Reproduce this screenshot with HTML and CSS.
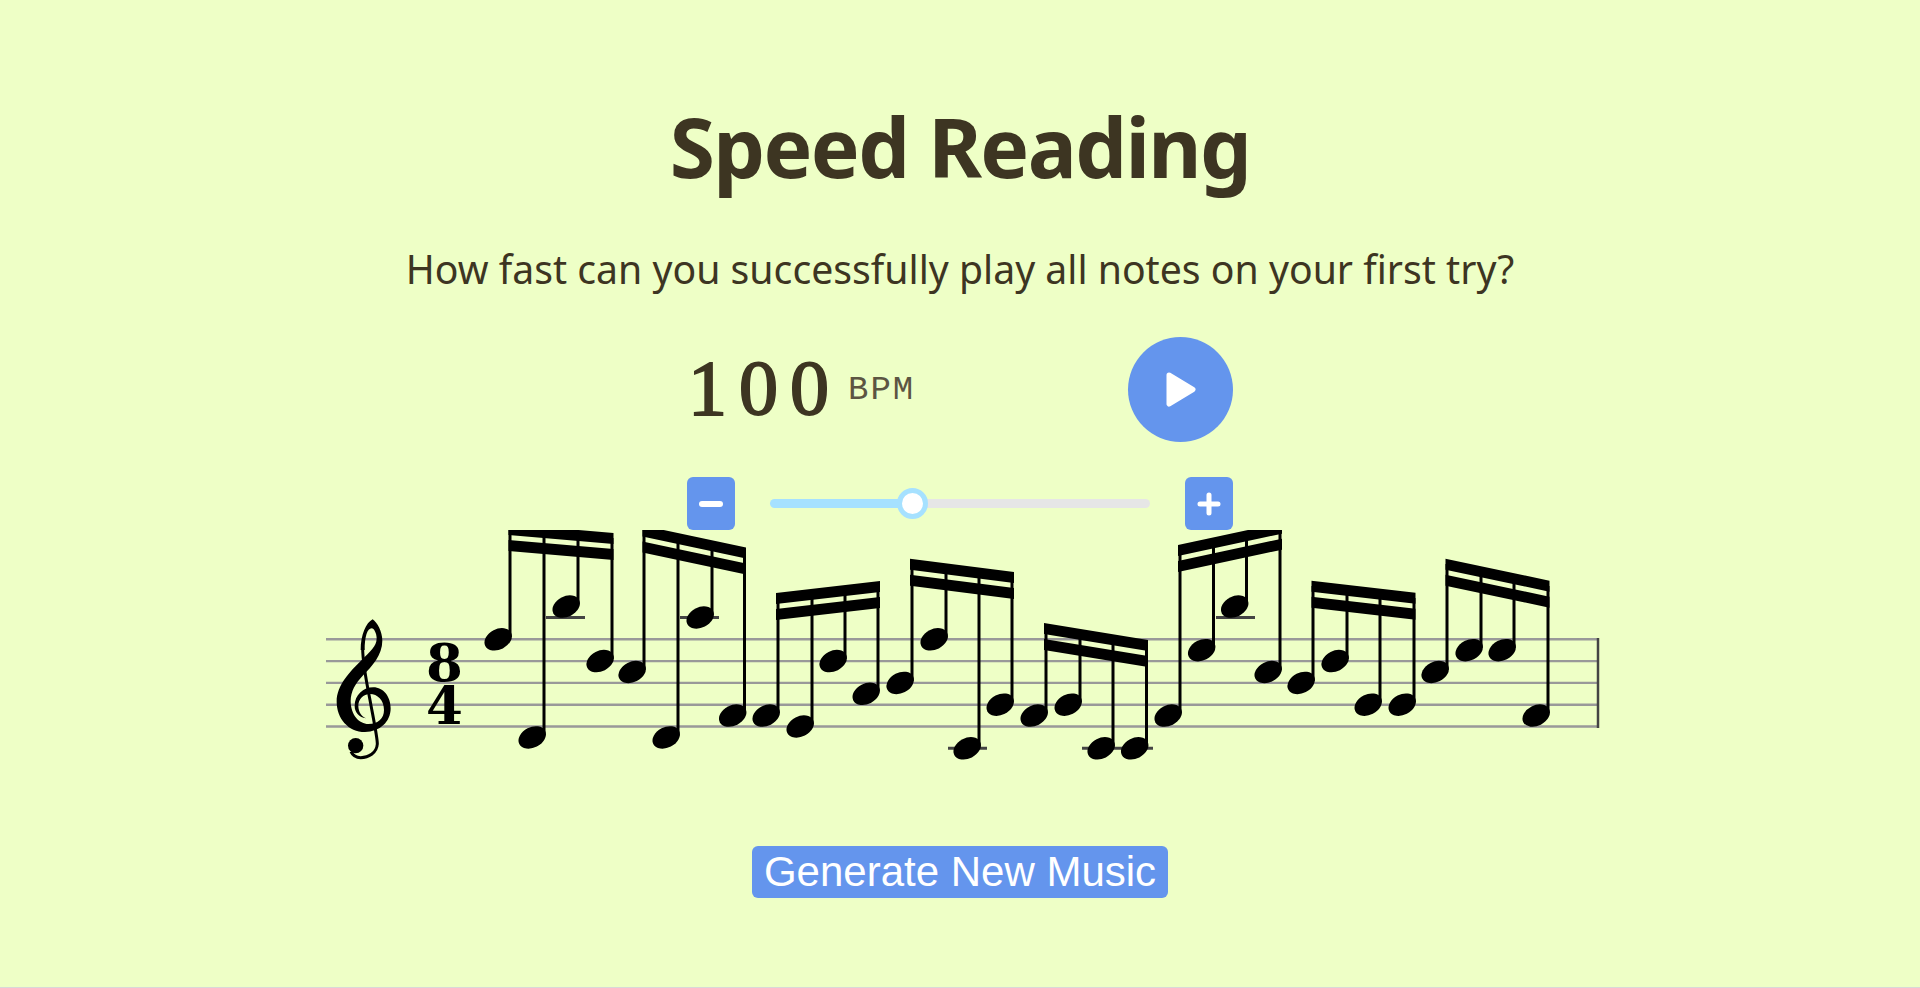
FILE: index.html
```html
<!DOCTYPE html>
<html lang="en">
<head>
<meta charset="UTF-8" />
<title>Speed Reading</title>
<link rel="stylesheet" href="styles.css">
</head>
<body>

<h1>Speed Reading</h1>
<p class="intro">How fast can you successfully play all notes on your first try?</p>

<div class="tempo">
	<div class="tempo-top">
		<div class="readout">
			<span class="bpm-value">100</span>
			<span class="bpm-unit">BPM</span>
		</div>
		<button class="play" type="button" aria-label="Play">
			<svg viewBox="0 0 30 35" width="30" height="35"><path d="M3 3 L27 17.5 L3 32 Z" fill="#fff" stroke="#fff" stroke-width="5" stroke-linejoin="round"/></svg>
		</button>
	</div>
	<div class="tempo-slider">
		<button class="step" type="button" aria-label="Slower">
			<svg viewBox="0 0 24 24" width="24" height="24"><path d="M3 12 H21" stroke="#fff" stroke-width="6" stroke-linecap="round"/></svg>
		</button>
		<input class="slider" type="range" min="40" max="205" value="100">
		<button class="step" type="button" aria-label="Faster">
			<svg viewBox="0 0 24 24" width="24" height="24"><path d="M3 12 H21 M12 3 V21" stroke="#fff" stroke-width="5" stroke-linecap="round"/></svg>
		</button>
	</div>
</div>

<!-- viewBox uses page coordinates so the notes read straight off the layout -->
<svg class="score" viewBox="320 530 1280 240" width="1280" height="240">
	<defs>
		<ellipse id="head" rx="14.5" ry="10.2" transform="rotate(-27)"/>
	</defs>

	<g class="staff">
		<path d="M326 639.3 H1598 M326 661.1 H1598 M326 682.9 H1598 M326 704.7 H1598 M326 726.5 H1598"/>
	</g>
	<path class="barline" d="M1598 638 V728"/>

	<!-- treble clef -->
	<g transform="translate(320 600) scale(0.3333)">
		<path d="M158 58 C172 68 187 95 187 122 C187 165 155 200 130 225 C106 250 92 275 92 303 C92 345 118 372 145 372 C175 372 192 355 192 330 C192 300 172 282 150 282 C130 282 115 298 115 318 C115 335 125 350 138 355 C118 352 104 338 104 318 C104 285 130 262 160 262 C190 262 212 290 212 325 C212 365 180 396 135 396 C85 396 50 355 50 305 C50 255 90 215 125 180 C150 155 170 140 170 115 C170 100 162 85 155 85 C142 85 134 110 134 150 L122 150 C122 105 138 68 158 58 Z"/>
		<path d="M128 145 C128 190 140 250 150 300 C158 345 172 410 172 432 C170 460 145 473 122 473 C108 473 98 466 93 455" fill="none" stroke="#000" stroke-width="9"/>
		<circle cx="107" cy="437" r="23"/>
	</g>

	<text class="meter" x="444.5" y="681">8</text>
	<text class="meter" x="444.5" y="724">4</text>

	<path class="ledger" d="M546 617.5 H585 M680 617.5 H719 M948 748.3 H987 M1082 748.3 H1153 M1216 617.5 H1255"/>

	<g>
		<polygon points="508.5,524 613.5,533 613.5,544 508.5,535"/>
		<polygon points="508.5,540 613.5,549 613.5,560 508.5,551"/>
		<path class="stems" d="M510 637 V529 M544 735 V532 M578 604 V535 M612 659 V538"/>
		<use href="#head" x="498.2" y="639.3"/>
		<use href="#head" x="532.2" y="737.4"/>
		<use href="#head" x="566.2" y="606.6"/>
		<use href="#head" x="600.2" y="661.1"/>
	</g>
	<g>
		<polygon points="642.5,525.5 746,547.5 746,558.5 642.5,536.5"/>
		<polygon points="642.5,541.5 746,563.5 746,574.5 642.5,552.5"/>
		<path class="stems" d="M644 670 V530 M678 735 V538 M712 615 V545 M744.5 713 V552"/>
		<use href="#head" x="632.2" y="672"/>
		<use href="#head" x="666.2" y="737.4"/>
		<use href="#head" x="700.2" y="617.5"/>
		<use href="#head" x="732.7" y="715.6"/>
	</g>
	<g>
		<polygon points="776,593 880,581 880,592 776,604"/>
		<polygon points="776,609 880,597 880,608 776,620"/>
		<path class="stems" d="M778 713 V598 M812 724 V594 M845 659 V590 M878 691 V586"/>
		<use href="#head" x="766.2" y="715.6"/>
		<use href="#head" x="800.2" y="726.5"/>
		<use href="#head" x="833.2" y="661.1"/>
		<use href="#head" x="866.2" y="693.8"/>
	</g>
	<g>
		<polygon points="910,558.7 1014,572 1014,583 910,569.7"/>
		<polygon points="910,574.7 1014,588 1014,599 910,585.7"/>
		<path class="stems" d="M912 681 V564 M946 637 V568 M979 746 V573 M1012 702 V577"/>
		<use href="#head" x="900.2" y="682.9"/>
		<use href="#head" x="934.2" y="639.3"/>
		<use href="#head" x="967.2" y="748.3"/>
		<use href="#head" x="1000.2" y="704.7"/>
	</g>
	<g>
		<polygon points="1044,623 1148,640 1148,651 1044,634"/>
		<polygon points="1044,639 1148,656 1148,667 1044,650"/>
		<path class="stems" d="M1046 713 V628 M1080 702 V634 M1113 746 V639 M1146.5 746 V645"/>
		<use href="#head" x="1034.2" y="715.6"/>
		<use href="#head" x="1068.2" y="704.7"/>
		<use href="#head" x="1101.2" y="748.3"/>
		<use href="#head" x="1134.7" y="748.3"/>
	</g>
	<g>
		<polygon points="1178,545 1282,522.7 1282,533.7 1178,556"/>
		<polygon points="1178,561 1282,538.7 1282,549.7 1178,572"/>
		<path class="stems" d="M1180 713 V550 M1213.5 648 V543 M1246.5 604 V535 M1280 670 V528"/>
		<use href="#head" x="1168.2" y="715.6"/>
		<use href="#head" x="1201.7" y="650.2"/>
		<use href="#head" x="1234.7" y="606.6"/>
		<use href="#head" x="1268.2" y="672"/>
	</g>
	<g>
		<polygon points="1311.5,580.7 1415.5,592.7 1415.5,603.7 1311.5,591.7"/>
		<polygon points="1311.5,596.7 1415.5,608.7 1415.5,619.7 1311.5,607.7"/>
		<path class="stems" d="M1313 681 V586 M1347 659 V590 M1380 702 V594 M1414 702 V598"/>
		<use href="#head" x="1301.2" y="682.9"/>
		<use href="#head" x="1335.2" y="661.1"/>
		<use href="#head" x="1368.2" y="704.7"/>
		<use href="#head" x="1402.2" y="704.7"/>
	</g>
	<g>
		<polygon points="1445.5,558.7 1549.5,580.7 1549.5,591.7 1445.5,569.7"/>
		<polygon points="1445.5,574.7 1549.5,596.7 1549.5,607.7 1445.5,585.7"/>
		<path class="stems" d="M1447 670 V564 M1481 648 V571 M1514 648 V578 M1548 713 V586"/>
		<use href="#head" x="1435.2" y="672"/>
		<use href="#head" x="1469.2" y="650.2"/>
		<use href="#head" x="1502.2" y="650.2"/>
		<use href="#head" x="1536.2" y="715.6"/>
	</g>
</svg>

<button class="generate" type="button">Generate New Music</button>

</body>
</html>
```

FILE: styles.css
```css
body
{
	display: flex;
	flex-direction: column;
	align-items: center;
	box-sizing: border-box;
	min-height: 988px;
	margin: 0;
	padding-top: 104px;
	font-family: "Noto Sans", "Open Sans", sans-serif;
	color: #3d3522;
	background-color: #eeffc6;
	border-bottom: 1px solid #d8d8d8;
}

h1
{
	margin: 0 0 57px;
	font-size: 82px;
	line-height: 84px;
	font-weight: 700;
	letter-spacing: -1.6px;
}

.intro
{
	margin: 0 0 44px;
	font-size: 39.2px;
	line-height: 48px;
}

.tempo
{
	display: flex;
	flex-direction: column;
	gap: 35px;
	width: 546px;
}

.tempo-top, .tempo-slider
{
	display: flex;
	align-items: center;
	justify-content: space-between;
}

.readout
{
	display: flex;
	align-items: center;
	gap: 7px;
	padding-left: 1px;
}

.bpm-value
{
	padding-bottom: 4px;
	font-family: "Liberation Serif", serif;
	font-size: 78px;
	letter-spacing: 12px;
	-webkit-text-stroke: 2px #3d3522;
}

.bpm-unit
{
	font-family: "Liberation Mono", monospace;
	font-size: 34px;
	letter-spacing: 2px;
	color: #5c5542;
}

.play
{
	display: flex;
	align-items: center;
	justify-content: center;
	width: 105px;
	height: 105px;
	padding: 0 0 0 1px;
	border: 0;
	border-radius: 50%;
	background-color: #6495ed;
}

.step
{
	display: flex;
	align-items: center;
	justify-content: center;
	width: 48px;
	height: 53px;
	padding: 0;
	border: 0;
	border-radius: 6px;
	background-color: #6495ed;
}

.slider
{
	width: 380px;
	height: 9px;
	margin: 0;
	border-radius: 5px;
	background: linear-gradient(to right, #a6e1ff 37.5%, #e6e6e6 37.5%);
	-webkit-appearance: none;
	appearance: none;
}

.slider::-webkit-slider-thumb
{
	box-sizing: border-box;
	width: 31px;
	height: 31px;
	border: 5px solid #a6e1ff;
	border-radius: 50%;
	background-color: #fff;
	-webkit-appearance: none;
	appearance: none;
}

.score
{
	display: block;
	flex: none;
}

.staff path
{
	fill: none;
	stroke: #999;
	stroke-width: 2.4;
}

.barline
{
	stroke: #444;
	stroke-width: 2.5;
}

.ledger
{
	stroke: #444;
	stroke-width: 3;
}

.stems
{
	fill: none;
	stroke: #000;
	stroke-width: 3;
}

.meter
{
	font-family: "DejaVu Serif", serif;
	font-size: 53px;
	font-weight: 700;
	text-anchor: middle;
}

.generate
{
	width: 416px;
	height: 52px;
	margin-top: 76px;
	padding: 0;
	border: 0;
	border-radius: 6px;
	font-family: "Liberation Sans", Arial, sans-serif;
	font-size: 42px;
	line-height: 52px;
	color: #fff;
	background-color: #6495ed;
}
```
